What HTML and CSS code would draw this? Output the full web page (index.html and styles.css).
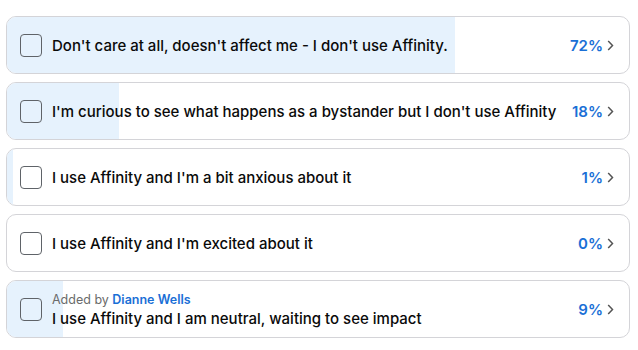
FILE: index.html
```html
<!DOCTYPE html>
<html lang="en">
<head>
    <meta charset="UTF-8">
    <meta name="viewport" content="width=device-width, initial-scale=1.0">
    <title>Poll</title>
    <link rel="stylesheet" href="styles.css">
</head>
<body>

<div class="poll">
    <!-- Poll options -->
    <div class="option">
        <div class="fill" style="width: 72%"></div>
        <span class="check"></span>
        <div class="label">
            <div class="text">Don't care at all, doesn't affect me - I don't use Affinity.</div>
        </div>
        <span class="percent">72%</span>
        <svg class="chevron" width="7" height="11" viewBox="0 0 7 11"><path d="M1.2 1l4.3 4.5-4.3 4.5" fill="none" stroke="#555" stroke-width="1.5"/></svg>
    </div>

    <div class="option">
        <div class="fill" style="width: 18%"></div>
        <span class="check"></span>
        <div class="label">
            <div class="text">I'm curious to see what happens as a bystander but I don't use Affinity</div>
        </div>
        <span class="percent">18%</span>
        <svg class="chevron" width="7" height="11" viewBox="0 0 7 11"><path d="M1.2 1l4.3 4.5-4.3 4.5" fill="none" stroke="#555" stroke-width="1.5"/></svg>
    </div>

    <div class="option">
        <div class="fill" style="width: 1%"></div>
        <span class="check"></span>
        <div class="label">
            <div class="text">I use Affinity and I'm a bit anxious about it</div>
        </div>
        <span class="percent">1%</span>
        <svg class="chevron" width="7" height="11" viewBox="0 0 7 11"><path d="M1.2 1l4.3 4.5-4.3 4.5" fill="none" stroke="#555" stroke-width="1.5"/></svg>
    </div>

    <div class="option">
        <div class="fill" style="width: 0%"></div>
        <span class="check"></span>
        <div class="label">
            <div class="text">I use Affinity and I'm excited about it</div>
        </div>
        <span class="percent">0%</span>
        <svg class="chevron" width="7" height="11" viewBox="0 0 7 11"><path d="M1.2 1l4.3 4.5-4.3 4.5" fill="none" stroke="#555" stroke-width="1.5"/></svg>
    </div>

    <div class="option">
        <div class="fill" style="width: 9%"></div>
        <span class="check"></span>
        <div class="label">
            <div class="added">Added by <a href="#">Dianne Wells</a></div>
            <div class="text">I use Affinity and I am neutral, waiting to see impact</div>
        </div>
        <span class="percent">9%</span>
        <svg class="chevron" width="7" height="11" viewBox="0 0 7 11"><path d="M1.2 1l4.3 4.5-4.3 4.5" fill="none" stroke="#555" stroke-width="1.5"/></svg>
    </div>
</div>

</body>
</html>
```

FILE: styles.css
```css
body {
    font-family: Inter, "Noto Sans", sans-serif;
    margin: 0;
    background-color: #fff;
    color: #111;
}
.poll {
    display: flex;
    flex-direction: column;
    gap: 8px;
    padding: 16px 8px 0 6px;
}
.option {
    position: relative;
    display: flex;
    align-items: center;
    height: 58px;
    box-sizing: border-box;
    padding: 0 15px 0 13px;
    border: 1px solid #d4d4d8;
    border-radius: 10px;
    overflow: hidden;
    background-color: #fff;
}
.fill {
    position: absolute;
    left: 0;
    top: 0;
    bottom: 0;
    background-color: #e6f2fd;
}
.check {
    position: relative;
    width: 20px;
    height: 21px;
    border: 1px solid #5f6368;
    border-radius: 4px;
    flex-shrink: 0;
    background-color: transparent;
}
.label {
    position: relative;
    flex: 1;
    margin-left: 10px;
    padding-top: 1px;
}
.text {
    font-size: 15px;
    font-weight: 500;
    color: #0a0a0a;
}
.added {
    font-size: 12.5px;
    color: #6b6b6b;
    margin-bottom: 2px;
}
.added a {
    color: #1a6fd6;
    font-weight: 600;
    text-decoration: none;
}
.percent {
    position: relative;
    font-size: 15px;
    font-weight: 600;
    color: #1a6fd6;
}
.chevron {
    position: relative;
    margin-left: 4px;
}
```
